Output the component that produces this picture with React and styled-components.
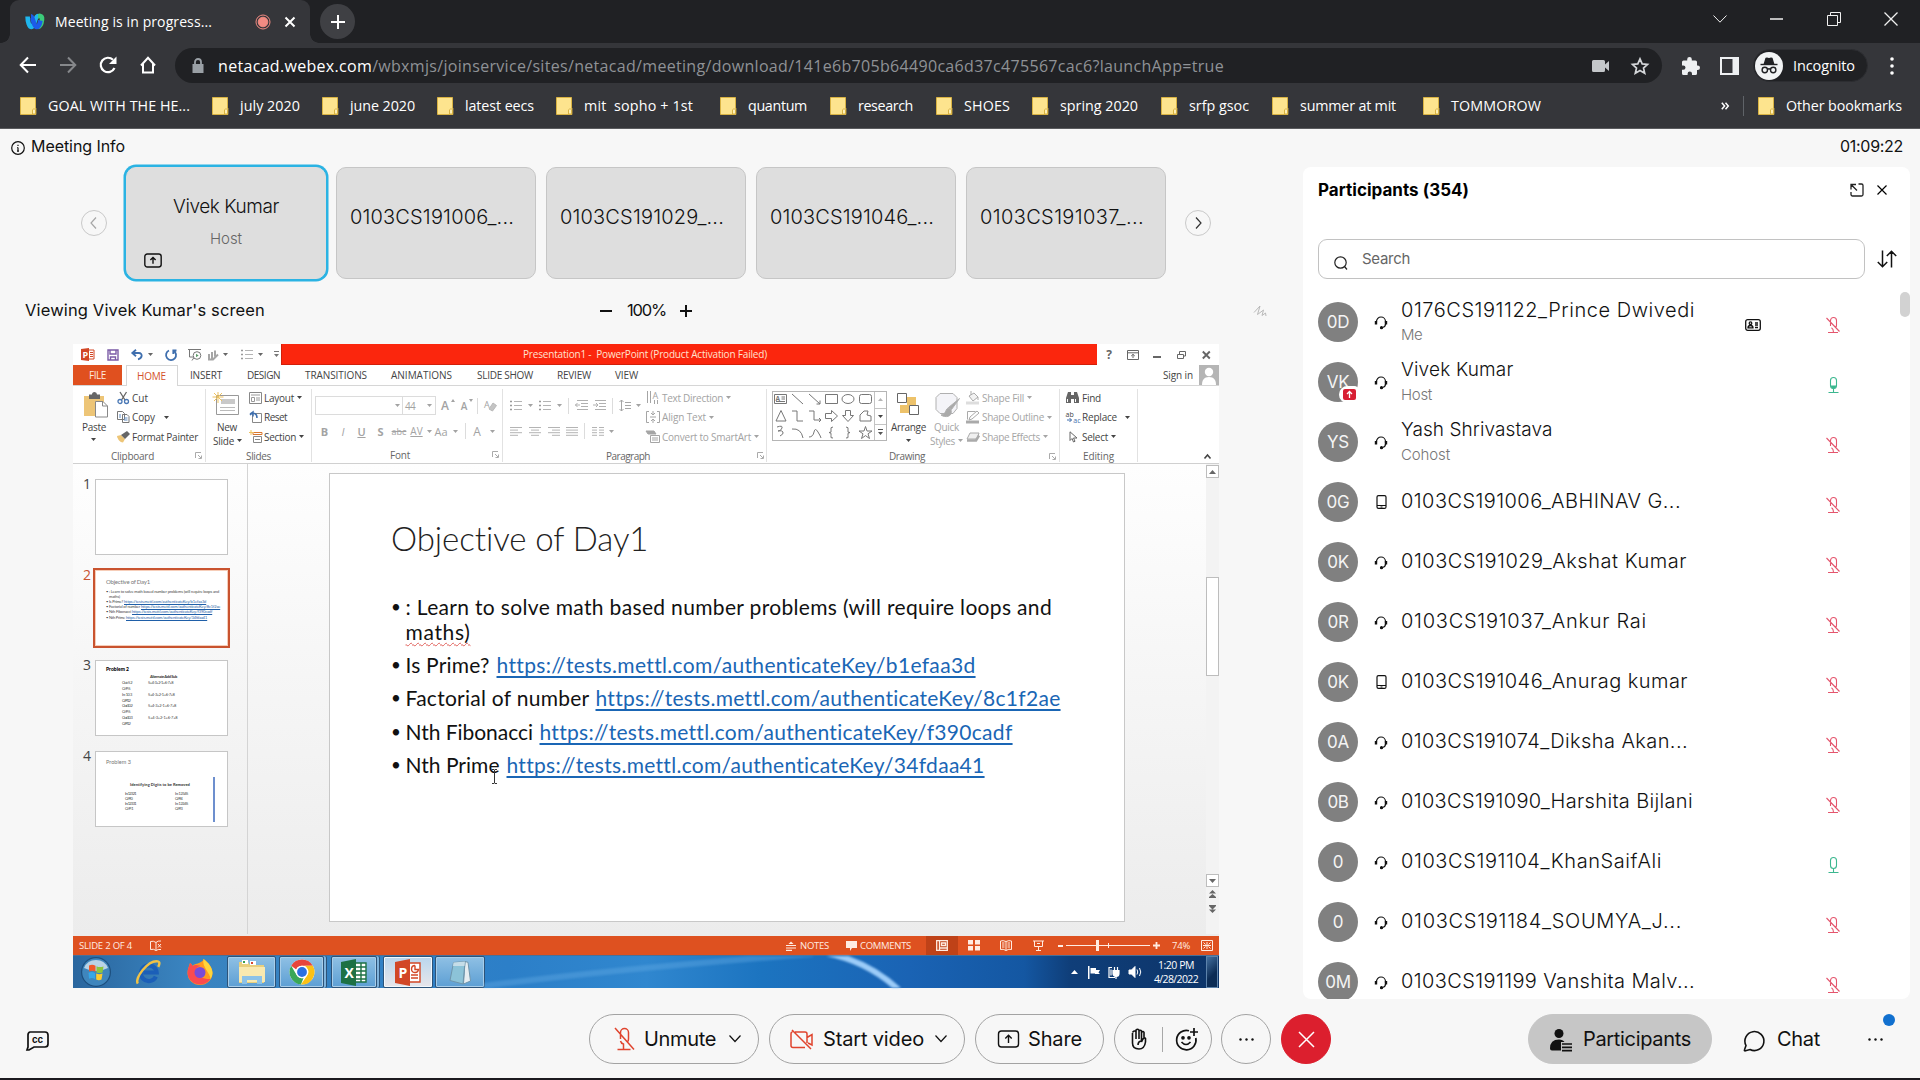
import React, { useLayoutEffect, useRef, useState } from "react";
import styled, { createGlobalStyle, css } from "styled-components";

const ui = '"Open Sans", "Noto Sans", sans-serif';
const webex = 'Inter, "Liberation Sans", sans-serif';
const slideFont = 'Lato, "Open Sans", sans-serif';

const Global = createGlobalStyle`
  * { box-sizing: border-box; }
  body { margin: 0; background: #f7f7f7; overflow: hidden; }
  ul, p, h1, h2 { margin: 0; padding: 0; list-style: none; font-weight: inherit; }
`;

/* ---------- text that tracks itself to a given width ---------- */

const FitBox = styled.span`
  display: inline-block;
  flex: none;
  width: ${(p) => p.$w}px;
  margin-left: ${(p) => p.$ml || 0}px;
  white-space: pre;
  text-decoration: inherit;
`;

function Fit({ w, ml, children }) {
  const ref = useRef(null);
  const [spacing, setSpacing] = useState(0);
  useLayoutEffect(() => {
    const natural = ref.current.getBoundingClientRect().width;
    setSpacing((w - natural) / ref.current.textContent.length);
  }, [w]);
  return (
    <FitBox $w={w} $ml={ml}>
      <span ref={ref} style={{ letterSpacing: spacing }}>{children}</span>
    </FitBox>
  );
}

const Glyph = styled.svg`
  display: block;
  flex: none;
  overflow: visible;
  fill: ${(p) => p.$fill || "none"};
  stroke: ${(p) => p.$stroke || "currentColor"};
  stroke-width: ${(p) => p.$sw || 1};
  margin-left: ${(p) => p.$ml || 0}px;
  margin-top: ${(p) => p.$mt || 0}px;
`;

const GlyphText = styled.text`
  font-family: ${(p) => p.$f || ui};
  font-size: ${(p) => p.$s}px;
  font-weight: ${(p) => p.$b || 400};
  fill: ${(p) => p.$c || "currentColor"};
  stroke: none;
`;

function Ic({ w, h = w, box, children, ...rest }) {
  return (
    <Glyph width={w} height={h} viewBox={box || `0 0 ${w} ${h}`} {...rest}>
      {children}
    </Glyph>
  );
}

const Slot = styled.span`
  display: flex;
  flex: none;
  align-items: center;
  justify-content: center;
  width: ${(p) => p.$w}px;
  margin-left: ${(p) => p.$ml || 0}px;
`;

const Spacer = styled.span`
  flex: 1;
`;

const Page = styled.div`
  display: flex;
  flex-direction: column;
  width: 1920px;
  height: 1080px;
  background: #f7f7f7;
  border-bottom: 2px solid #1c1a1f;
  font-family: ${webex};
  color: #111;
`;

/* ---------- browser ---------- */

const Browser = styled.header`
  flex: none;
  height: 129px;
  background: #35363a;
  border-bottom: 1px solid #5a5b5e;
  font-family: ${ui};
  color: #fff;
`;

const TabStrip = styled.div`
  display: flex;
  height: 43px;
  background: #202124;
`;

const Tab = styled.div`
  position: relative;
  display: flex;
  align-items: center;
  width: 300px;
  height: 43px;
  margin-left: 10px;
  background: #35363a;
  border-radius: 9px 9px 0 0;
  font-size: 14px;
  &::before,
  &::after {
    content: "";
    position: absolute;
    bottom: 0;
    width: 9px;
    height: 9px;
  }
  &::before {
    left: -9px;
    background: radial-gradient(circle at 0 0, #202124 8.5px, #35363a 9px);
  }
  &::after {
    right: -9px;
    background: radial-gradient(circle at 100% 0, #202124 8.5px, #35363a 9px);
  }
`;

const NewTab = styled.div`
  display: flex;
  align-items: center;
  justify-content: center;
  width: 35px;
  height: 35px;
  margin: 4px 0 0 10px;
  border-radius: 50%;
  background: #3f4044;
`;

const WindowControls = styled.div`
  display: flex;
  align-items: center;
  height: 37px;
  color: #f0f0f0;
`;

const NavBar = styled.div`
  display: flex;
  align-items: center;
  height: 45px;
`;

const NavIcons = styled.div`
  display: flex;
  align-items: center;
  gap: 20px;
  margin: -2px 0 0 18px;
`;

const Omnibox = styled.div`
  display: flex;
  align-items: center;
  width: 1487px;
  height: 35px;
  margin-left: 18px;
  border-radius: 18px;
  background: #202124;
  font-size: 16px;
  color: #8f9296;
  b {
    font-weight: 400;
    color: #fff;
  }
`;

const Incognito = styled.div`
  display: flex;
  align-items: center;
  width: 115px;
  height: 33px;
  margin-left: 14px;
  border: 1px solid #2c2d31;
  border-radius: 17px;
  background: #202124;
  font-size: 14.5px;
`;

const Bookmarks = styled.div`
  display: flex;
  align-items: center;
  height: 36px;
  padding-left: 20px;
  font-size: 14.3px;
`;

const Bookmark = styled.div`
  display: flex;
  align-items: center;
  flex: none;
  width: ${(p) => p.$w}px;
  line-height: 24px;
`;

const Folder = () => (
  <Ic w={16} h={18} $stroke="#d9b343">
    <path d="M.5.5h15V11h.4v6.5H.5z" fill="#fde48e" />
    <path d="M12.5 17v-4l1.5-1.5 1.5 1.500V17z" fill="#fff0b4" />
  </Ic>
);

const bookmarks = [
  ["GOAL WITH THE HE...", 142, 192],
  ["july 2020", 60, 110],
  ["june 2020", 65, 115],
  ["latest eecs", 69, 119],
  ["mit  sopho + 1st", 109, 164],
  ["quantum", 59, 110],
  ["research", 55, 106],
  ["SHOES", 46, 96],
  ["spring 2020", 78, 129],
  ["srfp gsoc", 60, 111],
  ["summer at mit", 96, 151],
  ["TOMMOROW", 90, 301],
];

const Pipe = styled.span`
  flex: none;
  width: 1px;
  height: ${(p) => p.$h}px;
  margin-left: ${(p) => p.$ml || 0}px;
  background: ${(p) => p.$c || "#dcdcdc"};
`;

function BrowserChrome() {
  return (
    <Browser>
      <TabStrip>
        <Tab>
          <Ic w={20} h={17} $ml={15} $sw={4.6}>
            <path d="M12 4.500c1.500-2.500 5.500-2.500 5 2-.4 4-1.600 7-4 7.500" stroke="#3ccb7a" />
            <path d="M2.600 3.600c0 5 1.600 10.400 4 10.400 2.600 0 3.400-11 6.400-11" stroke="#1fb6ee" />
            <path d="M6 3.200c2.200 0 2.400 10.800 5.600 10.800 2 0 3.200-3 3.800-6.500" stroke="#1c5be8" />
          </Ic>
          <Fit w={157} ml={10}>Meeting is in progress...</Fit>
          <Ic w={16} $ml={43} $stroke="#f28b82">
            <circle cx="8" cy="8" r="7" />
            <circle cx="8" cy="8" r="4.800" fill="#f28b82" />
          </Ic>
          <Ic w={12} $ml={13} $sw={2}>
            <path d="M1.500 1.500l9 9M10.500 1.500l-9 9" />
          </Ic>
        </Tab>
        <NewTab>
          <Ic w={16} $sw={2}>
            <path d="M8 1v14M1 8h14" />
          </Ic>
        </NewTab>
        <Spacer />
        <WindowControls>
          <Slot $w={57}>
            <Ic w={14} h={8}>
              <path d="M.5.5L7 7.200 13.500.5" />
            </Ic>
          </Slot>
          <Slot $w={57}>
            <Ic w={13} h={2} $sw={1.500}>
              <path d="M0 1h13" />
            </Ic>
          </Slot>
          <Slot $w={57}>
            <Ic w={14}>
              <path d="M.5 3.500h10v10H.5zM3.500 3.500v-3h10v10h-3" />
            </Ic>
          </Slot>
          <Slot $w={58}>
            <Ic w={14} $sw={1.300}>
              <path d="M.5.5l13 13M13.500.5l-13 13" />
            </Ic>
          </Slot>
        </WindowControls>
      </TabStrip>
      <NavBar>
        <NavIcons>
          <Slot $w={20}>
            <Ic w={18} $sw={2}>
              <path d="M17 9H2M9 1.500L1.700 9 9 16.500" />
            </Ic>
          </Slot>
          <Slot $w={20}>
            <Ic w={18} $sw={2} $stroke="#86888b">
              <path d="M1 9h15M9 1.500L16.300 9 9 16.500" />
            </Ic>
          </Slot>
          <Slot $w={20}>
            <Ic w={18} $sw={2.200}>
              <path d="M15.500 12A7.200 7.200 0 1 1 14 3.800" />
              <path d="M17.500.5v7.500H10z" fill="#fff" stroke="none" />
            </Ic>
          </Slot>
          <Slot $w={19}>
            <Ic w={16} h={18} $sw={2}>
              <path d="M1 9.500L8 1.800l7 7.700M3 8V16.500h10V8" />
            </Ic>
          </Slot>
        </NavIcons>
        <Omnibox>
          <Ic w={12} h={16} $ml={17} $stroke="#9aa0a6" $sw={1.800}>
            <path d="M3 7V4a3 3 0 0 1 6 0v3" />
            <rect x="1.400" y="6.900" width="9.200" height="7.200" fill="#9aa0a6" />
          </Ic>
          <Fit w={1006} ml={14}>
            <b>netacad.webex.com</b>/wbxmjs/joinservice/sites/netacad/meeting/download/141e6b705b64490ca6d37c475567cac6?launchApp=true
          </Fit>
          <Ic w={17} h={12} $ml={368} $fill="#c4c7ca" $stroke="none">
            <path d="M1.500 0h10A1.500 1.500 0 0 1 13 1.500V4.500l4-3.500v10l-4-3.500v3A1.500 1.500 0 0 1 11.500 12h-10A1.500 1.500 0 0 1 0 10.500v-9A1.500 1.500 0 0 1 1.500 0z" />
          </Ic>
          <Ic w={18} $ml={22} $stroke="#d4d6d9" $sw={1.700}>
            <path d="M9 1.900l2.200 5 5.300.5-4 3.600 1.200 5.200L9 13.500l-4.700 2.700 1.200-5.200-4-3.600 5.300-.5z" />
          </Ic>
        </Omnibox>
        <Ic w={18} $ml={20} $fill="#eef0f2" $stroke="none">
          <path d="M7.500 0a2.300 2.300 0 0 1 2.300 2.300V3.500h3.700A1.500 1.500 0 0 1 15 5v3.400h.7a2.300 2.300 0 0 1 0 4.600H15v3.500A1.500 1.500 0 0 1 13.500 18H10v-1.300a2.200 2.200 0 0 0-4.400 0V18H1.500A1.500 1.500 0 0 1 0 16.500V12.800h1.300a2.200 2.200 0 0 0 0-4.400H0V5a1.500 1.500 0 0 1 1.500-1.500h3.700V2.300A2.300 2.300 0 0 1 7.500 0z" />
        </Ic>
        <Ic w={19} h={18} $ml={20} $sw={2} $stroke="#eef0f2">
          <path d="M1 1h17v16H1z" />
          <path d="M12.500 2h5v14h-5z" fill="#eef0f2" stroke="none" />
        </Ic>
        <Incognito>
          <Ic w={28} $ml={1} $stroke="#202124" $sw={1.400}>
            <circle cx="14" cy="14" r="14" fill="#f1f3f4" stroke="none" />
            <path d="M9.500 11.500L11 6.500c1.500-.7 1.800.3 3 .3s1.500-1 3-.3l1.500 5z" fill="#202124" />
            <path d="M5.500 12.500h17" />
            <circle cx="9.800" cy="18" r="2.700" />
            <circle cx="18.200" cy="18" r="2.700" />
            <path d="M12.500 17.300q1.500-1 3 0" />
          </Ic>
          <Fit w={62} ml={10}>Incognito</Fit>
        </Incognito>
        <Ic w={4} h={18} $ml={22} $fill="#fff" $stroke="none">
          <circle cx="2" cy="2" r="1.800" />
          <circle cx="2" cy="9" r="1.800" />
          <circle cx="2" cy="16" r="1.800" />
        </Ic>
      </NavBar>
      <Bookmarks>
        {bookmarks.map(([name, w, pitch]) => (
          <Bookmark key={name} $w={pitch}>
            <Folder />
            <Fit w={w} ml={12}>{name}</Fit>
          </Bookmark>
        ))}
        <Ic w={8} h={8} $ml={-3} $sw={1.500}>
          <path d="M.8.8L3.600 4 .8 7.200M4.500.8L7.300 4 4.500 7.200" />
        </Ic>
        <Pipe $h={20} $ml={14} $c="#5f6368" />
        <Bookmark $w={150}>
          <Slot $w={16} $ml={14}><Folder /></Slot>
          <Fit w={116} ml={12}>Other bookmarks</Fit>
        </Bookmark>
      </Bookmarks>
    </Browser>
  );
}

/* ---------- Webex stage ---------- */

const Webex = styled.main`
  display: flex;
  flex-direction: column;
  height: 949px;
`;

const InfoBar = styled.div`
  display: flex;
  align-items: center;
  height: 38px;
  padding: 0 0 4px 11px;
  font-size: 16px;
`;

const Middle = styled.div`
  display: flex;
  height: 832px;
`;

const Stage = styled.section`
  display: flex;
  flex-direction: column;
  width: 1303px;
`;

const FilmStrip = styled.div`
  display: flex;
  align-items: center;
  height: 112px;
`;

const RoundArrow = styled.div`
  display: flex;
  align-items: center;
  justify-content: center;
  width: 26px;
  height: 26px;
  margin-left: ${(p) => p.$ml}px;
  border: 1px solid #c9c9c9;
  border-radius: 50%;
  color: ${(p) => (p.$off ? "#a6a6a6" : "#333")};
`;

const Cards = styled.div`
  display: flex;
  gap: 10px;
  margin-left: 19px;
`;

const Card = styled.div`
  display: flex;
  flex-direction: column;
  align-items: center;
  width: 200px;
  height: 112px;
  padding-top: ${(p) => (p.$active ? 25 : 36)}px;
  border: 1px solid ${(p) => (p.$active ? "#dedede" : "#c6c6c6")};
  border-radius: 10px;
  background: #dedede;
  font-size: ${(p) => (p.$active ? 19 : 20)}px;
  font-weight: 300;
  line-height: 27px;
  ${(p) => p.$active && css`box-shadow: 0 0 0 2.500px #2bb3e3;`}
`;

const CardRole = styled.div`
  margin-top: 8px;
  font-size: 15px;
  line-height: 22px;
  color: #666;
`;

const CardFoot = styled.div`
  align-self: flex-start;
  padding: 3px 0 0 17px;
`;

const ViewBar = styled.div`
  display: flex;
  align-items: center;
  height: 65px;
  padding: 0 0 3px 25px;
  font-size: 16.5px;
`;

const Chevron = ({ dir = "down", w = 12 }) => (
  <Ic w={w} h={w} box="0 0 12 12" $sw={1.200}>
    <path
      d={dir === "left" ? "M8 .5L3 6l5 5.500" : dir === "right" ? "M4 .5L9 6l-5 5.500" : "M.5 2.500L6 8.500l5.500-6"}
    />
  </Ic>
);

const ShareGlyph = ({ w, h, sw = 1.400, ml }) => (
  <Ic w={w} h={h} box="0 0 22 18" $sw={sw} $ml={ml}>
    <rect x="1" y="1" width="20" height="16" rx="3" />
    <path d="M11 13V5.500M7.800 8.500L11 5.300l3.200 3.200" />
  </Ic>
);

function TopStrip() {
  return (
    <>
      <FilmStrip>
        <RoundArrow $ml={80.5} $off><Chevron dir="left" /></RoundArrow>
        <Cards>
          <Card $active>
            <Fit w={106} ml={1}>Vivek Kumar</Fit>
            <CardRole><Fit w={32} ml={1}>Host</Fit></CardRole>
            <CardFoot><ShareGlyph w={18} h={15} sw={1.700} /></CardFoot>
          </Card>
          {["0103CS191006_...", "0103CS191029_...", "0103CS191046_...", "0103CS191037_..."].map((n) => (
            <Card key={n}><Fit w={164} ml={-7}>{n}</Fit></Card>
          ))}
        </Cards>
        <RoundArrow $ml={19.5}><Chevron dir="right" /></RoundArrow>
      </FilmStrip>
      <ViewBar>
        <Fit w={240}>Viewing Vivek Kumar's screen</Fit>
        <Ic w={12} h={12} $ml={335} $mt={2} $sw={2}><path d="M0 6h12" /></Ic>
        <Fit w={39} ml={15}>100%</Fit>
        <Ic w={12} h={12} $ml={14} $mt={2} $sw={2}><path d="M0 6h12M6 0v12" /></Ic>
        <Ic w={14} h={12} $ml={561} $mt={2} $stroke="#b9b9b9">
          <path d="M1 7.500L7 1 4.500 9.500 10.500 5 9 10.500l3.500-2.500.5 3" />
        </Ic>
      </ViewBar>
    </>
  );
}

/* ---------- PowerPoint ---------- */

const Ppt = styled.div`
  display: flex;
  flex-direction: column;
  width: 1146px;
  height: 644px;
  margin-left: 73px;
  background: #fff;
  font-family: ${ui};
  font-size: 10px;
  color: #444;
`;

const TitleRow = styled.div`
  display: flex;
  align-items: center;
  height: 21px;
  color: #666;
`;

const RedTitle = styled.div`
  display: flex;
  align-items: center;
  flex: none;
  height: 21px;
  width: 816px;
  margin-left: 2px;
  padding-left: 241px;
  background: #fb260d;
  border-left: 1px solid #d21f0a;
  border-bottom: 1px solid #d21f0a;
  color: #ffe3cf;
`;

const TabRow = styled.div`
  display: flex;
  height: 21px;
  line-height: 21px;
  border-bottom: 1px solid #d6d6d6;
`;

const FileTab = styled.div`
  width: 49px;
  height: 20px;
  padding-left: 16px;
  background: #e0501f;
  color: #ffe9dd;
`;

const HomeTab = styled.div`
  width: 52px;
  height: 21px;
  margin-left: 4px;
  padding-left: 10px;
  border: 1px solid #d6d6d6;
  border-bottom: 0;
  line-height: 20px;
  background: #fff;
  color: #d3532c;
`;

const Avatar = styled.div`
  width: 20px;
  height: 20px;
  margin-left: 6px;
  background: #b5b5b5;
`;

const Ribbon = styled.div`
  display: flex;
  height: 78px;
  border-bottom: 1px solid #d0d0d0;
`;

const Group = styled.div`
  display: flex;
  flex-direction: column;
  flex: none;
  width: ${(p) => p.$w}px;
  height: 73px;
  margin-top: 3px;
  border-right: 1px solid #e2e2e2;
  color: ${(p) => (p.$off ? "#a3a3a3" : "#444")};
`;

const GroupBody = styled.div`
  display: flex;
  height: 59px;
`;

const GroupFoot = styled.div`
  display: flex;
  align-items: center;
  height: 15px;
  margin-top: 2px;
  color: #666;
`;

const Launcher = ({ ml }) => (
  <Ic w={7} $ml={ml} $stroke="#aaa">
    <path d="M.5 6V.5H6M3 3l3 3M6.500 3.500v3h-3" />
  </Ic>
);

const Column = styled.div`
  display: flex;
  flex-direction: column;
  flex: none;
  width: ${(p) => p.$w || "auto"};
  margin: ${(p) => (p.$pt ? 0 : -1)}px 0 0 ${(p) => p.$ml || 0}px;
  padding-top: ${(p) => p.$pt || 0}px;
  color: ${(p) => p.$c || "inherit"};
`;

const Line = styled.div`
  display: flex;
  align-items: center;
  height: ${(p) => p.$h || 19.500}px;
  margin-top: ${(p) => p.$mt || 0}px;
  padding-left: ${(p) => p.$pl || 0}px;
`;

const Drop = ({ ml }) => (
  <Ic w={5} h={3} $ml={ml} $fill="currentColor" $stroke="none"><path d="M0 0h5L2.500 3z" /></Ic>
);

const FontBox = styled.div`
  display: flex;
  align-items: center;
  width: ${(p) => p.$w}px;
  height: 19px;
  margin-left: ${(p) => p.$ml || 0}px;
  padding-left: 2px;
  border: 1px solid #dcdcdc;
`;

const Letter = styled.span`
  width: ${(p) => p.$w}px;
  flex: none;
  text-align: center;
  font-size: ${(p) => p.$s || 11}px;
  font-weight: ${(p) => p.$b || 400};
  font-style: ${(p) => (p.$i ? "italic" : "normal")};
  text-decoration: ${(p) => p.$d || "none"};
`;

const Gallery = styled.div`
  display: flex;
  width: 115px;
  height: 50px;
  margin: 2px 0 0 5px;
  border: 1px solid #b5b5b5;
`;

const GalleryScroll = styled.div`
  display: flex;
  flex-direction: column;
  width: 12px;
  margin-left: auto;
`;

const GalleryButton = styled.div`
  display: flex;
  align-items: center;
  justify-content: center;
  height: 16px;
  border-left: 1px solid #c4c4c4;
  & + & {
    border-top: 1px solid #c4c4c4;
    height: 16.500px;
  }
`;

const Lines = ({ rows, w = 12, ml, bullets }) => (
  <Ic w={w} h={11} $ml={ml} $stroke="#b4b4b4">
    {rows.map(([x, len], i) => (
      <path key={i} d={`M${x} ${1.500 + i * (bullets ? 4 : 2.600)}h${len}`} />
    ))}
    {bullets && <path d="M0 1.500h2M0 5.500h2M0 9.500h2" stroke="#999" strokeWidth="1.600" />}
  </Ic>
);

const bulletRows = [[4, 8], [4, 8], [4, 8]];

function QuickAccess() {
  return (
    <TitleRow>
      <Ic w={14} h={13} $ml={8} $stroke="#d24726">
        <path d="M7 2h6v9H7z" fill="#fff" />
        <path d="M9 4.500h3M9 6.500h3M9 8.500h3" />
        <path d="M0 1l8-1v13l-8-1z" fill="#d24726" stroke="none" />
        <GlyphText x="1.500" y="10" $s={9} $b={700} $c="#fff">P</GlyphText>
      </Ic>
      <Ic w={12} h={12} $ml={12} $stroke="#7b5ba6" $sw={1.400}>
        <path d="M1 1h10v10H1zM3 1v4h6V1M3.500 11V8h5v3" />
      </Ic>
      <Ic w={13} h={11} $ml={12} $stroke="#3f6fae" $sw={1.800}>
        <path d="M5 .8L1.300 4 5 7.200M1.500 4h6.500c3.500 0 4 5-1 6.300" />
      </Ic>
      <Drop ml={4} />
      <Ic w={12} h={12} $ml={12} $stroke="#3f6fae" $sw={1.800}>
        <path d="M4 1.500a5 5 0 1 0 4.500.2M8.300 5V1.500h3.200" />
      </Ic>
      <Ic w={14} h={12} $ml={11} $stroke="#777">
        <path d="M0 .5h13M1.500.5v7.500H6M4 11.500l2-3" />
        <circle cx="9" cy="6.500" r="3.800" fill="#fff" />
        <path d="M8 4.800v3.400l2.700-1.700z" fill="#5f9c6a" stroke="none" />
      </Ic>
      <Ic w={12} h={12} $ml={5} $stroke="#a5a5a5" $sw={2}>
        <path d="M2 5v4.500M5 3v7M8 1.500v6M1 10.500h5l5-5" />
      </Ic>
      <Drop ml={4} />
      <Lines ml={13} bullets rows={bulletRows} />
      <Slot $w={5} $ml={5}><Drop /></Slot>
      <Ic w={5} h={7} $ml={11} $fill="#777" $stroke="none"><path d="M0 0h5v1H0zM0 3h5L2.500 6z" /></Ic>
      <RedTitle><Fit w={244}>Presentation1 -  PowerPoint (Product Activation Failed)</Fit></RedTitle>
      <Letter $w={24} $b={700} $s={12}>?</Letter>
      <Ic w={12} h={10} $ml={6}>
        <path d="M.5.5h11v9H.5zM.5 2.800h11M6 8V4.500M4.200 6L6 4.300 7.800 6" />
      </Ic>
      <Ic w={8} h={9} $ml={14} $sw={2}><path d="M0 7h8" /></Ic>
      <Ic w={9} h={8} $ml={16}><path d="M.5 3.500h6v4h-6zM2.500 3V.5h6v4.500H7" /></Ic>
      <Ic w={9} h={8} $ml={16} $sw={1.900}><path d="M.8.5l7 7M7.800.5l-7 7" /></Ic>
    </TitleRow>
  );
}

function PptTabs() {
  return (
    <TabRow>
      <FileTab><Fit w={17}>FILE</Fit></FileTab>
      <HomeTab><Fit w={29}>HOME</Fit></HomeTab>
      <Fit w={32} ml={12}>INSERT</Fit>
      <Fit w={33} ml={25}>DESIGN</Fit>
      <Fit w={62} ml={25}>TRANSITIONS</Fit>
      <Fit w={61} ml={24}>ANIMATIONS</Fit>
      <Fit w={56} ml={25}>SLIDE SHOW</Fit>
      <Fit w={34} ml={24}>REVIEW</Fit>
      <Fit w={23} ml={24}>VIEW</Fit>
      <Spacer />
      <Fit w={30}>Sign in</Fit>
      <Avatar>
        <Ic w={20} $fill="#fff" $stroke="none">
          <circle cx="10" cy="7" r="4.200" />
          <path d="M3 20c0-5 2-8 7-8s7 3 7 8z" />
        </Ic>
      </Avatar>
    </TabRow>
  );
}

function RibbonBar() {
  return (
    <Ribbon>
      <Group $w={133}>
        <GroupBody>
          <Column $ml={9} $pt={3}>
            <Ic w={26} h={26} $stroke="none" $ml={1}>
              <path d="M1 4h20v20H1z" fill="#edc577" />
              <path d="M6 2.500h3a2.500 2.500 0 0 1 5 0h3V7H6z" fill="#666" />
              <path d="M12.500 9.500h7.500l4.500 4.500v11h-12z" fill="#fff" stroke="#888" />
              <path d="M19.500 9.500V14h5" stroke="#888" fill="none" />
            </Ic>
            <Line $h={14} $mt={2}><Fit w={24}>Paste</Fit></Line>
            <Line $h={11} $pl={9}><Drop /></Line>
          </Column>
          <Column $ml={8}>
            <Line>
              <Ic w={12} h={12} $stroke="#666" $sw={1.300}>
                <path d="M3 0l5 8M9.500 0L4.500 8" />
                <circle cx="3" cy="9.500" r="2" stroke="#4a78b5" />
                <circle cx="9.500" cy="9.500" r="2" stroke="#4a78b5" />
              </Ic>
              <Fit w={16} ml={3}>Cut</Fit>
            </Line>
            <Line>
              <Ic w={13} h={12} $stroke="#777">
                <path d="M.5.5h5l2 2v6h-7zM5.500 3.500h4.500l2 2v6H5.500z" fill="#fff" />
                <path d="M7 7h3.500M7 9h3.500M2 4h2M2 6h2" stroke="#5b8ac2" />
              </Ic>
              <Fit w={23} ml={2}>Copy</Fit>
              <Drop ml={9} />
            </Line>
            <Line>
              <Ic w={13} h={12} $stroke="none">
                <path d="M0 5l4-1 4 4-2 3.500C3 11.500.5 8 0 5z" fill="#edc577" />
                <path d="M4 4l6-4 3 3-5 5z" fill="#666" />
              </Ic>
              <Fit w={66} ml={2}>Format Painter</Fit>
            </Line>
          </Column>
        </GroupBody>
        <GroupFoot><Fit w={43} ml={38}>Clipboard</Fit><Launcher ml={41} /></GroupFoot>
      </Group>

      <Group $w={106}>
        <GroupBody>
          <Column $ml={7} $pt={3}>
            <Ic w={27} h={24} $stroke="#999">
              <path d="M3.500 3.500h22v19h-22z" fill="#fff" />
              <path d="M8 7h14v5H8z" fill="#c9c9c9" stroke="none" />
              <path d="M7 15.500h15M7 18.500h15" stroke="#bbb" />
              <path d="M5 0v11M-.5 5h11M1 1l8 8M9 1L1 9" stroke="#edc15f" />
            </Ic>
            <Line $h={14} $mt={4} $pl={4}><Fit w={20}>New</Fit></Line>
            <Line $h={13}><Fit w={21}>Slide</Fit><Drop ml={3} /></Line>
          </Column>
          <Column $ml={7}>
            <Line>
              <Ic w={14} h={12} $stroke="#888">
                <path d="M.5.5h12v11H.5z" fill="#fff" />
                <path d="M2 3h9M2.500 5.500h3v4h-3zM7 6h4M7 8h4" stroke="#999" />
              </Ic>
              <Fit w={30} ml={1}>Layout</Fit><Drop ml={3} />
            </Line>
            <Line>
              <Ic w={14} h={12} $stroke="#888">
                <path d="M3.500 2.500h9v9h-9z" fill="#fff" />
                <path d="M1 3l3-2v4.500M1 4c3-3 7-2 7 3" stroke="#3f6fae" strokeWidth="1.500" />
              </Ic>
              <Fit w={23} ml={1}>Reset</Fit>
            </Line>
            <Line>
              <Ic w={14} h={13} $stroke="#888">
                <path d="M4.500 6.500h8v6h-8z" fill="#fff" />
                <path d="M4 2.500h9v2H4z" stroke="#d9762f" />
                <path d="M6 9.500h5" />
                <path d="M2 0v5M0 2.500h5" stroke="#edc15f" />
              </Ic>
              <Fit w={32} ml={1}>Section</Fit><Drop ml={3} />
            </Line>
          </Column>
        </GroupBody>
        <GroupFoot><Fit w={25} ml={40}>Slides</Fit></GroupFoot>
      </Group>

      <Group $w={191} $off>
        <GroupBody>
          <Column $ml={3} $pt={7}>
            <Line $h={19}>
              <FontBox $w={88}><Drop ml={77} /></FontBox>
              <FontBox $w={34} $ml={-1}><Fit w={10}>44</Fit><Drop ml={12} /></FontBox>
              <Letter $w={18} $s={12} $b={600}>A</Letter>
              <Ic w={4} h={3} $ml={-3} $mt={-10} $fill="currentColor" $stroke="none"><path d="M0 3h4L2 0z" /></Ic>
              <Letter $w={18} $s={10} $b={600}>A</Letter>
              <Ic w={4} h={3} $ml={-4} $mt={-10} $fill="currentColor" $stroke="none"><path d="M0 0h4L2 3z" /></Ic>
              <Pipe $h={16} $ml={4} />
              <Ic w={13} h={12} $ml={6} $stroke="#b9b9b9">
                <GlyphText x="0" y="8" $s={9}>A</GlyphText>
                <path d="M5 9l4-6 3.500 2.500L8.500 11z" fill="#c4c4c4" />
              </Ic>
            </Line>
            <Line $h={18} $mt={7}>
              <Letter $w={19} $b={700}>B</Letter>
              <Letter $w={18} $i>I</Letter>
              <Letter $w={19} $b={600} $d="underline">U</Letter>
              <Letter $w={19} $b={700}>S</Letter>
              <Letter $w={18} $s={9} $d="line-through">abc</Letter>
              <Letter $w={17} $s={10} $d="underline">AV</Letter>
              <Drop ml={2} />
              <Letter $w={18} $s={11}>Aa</Letter>
              <Drop ml={3} />
              <Pipe $h={16} $ml={7} />
              <Letter $w={22} $s={12}>A</Letter>
              <Drop ml={2} />
            </Line>
          </Column>
        </GroupBody>
        <GroupFoot><Fit w={20} ml={78}>Font</Fit><Launcher ml={82} /></GroupFoot>
      </Group>

      <Group $w={264} $off>
        <GroupBody>
          <Column $ml={7} $pt={7} $w="136px">
            <Line $h={19}>
              <Lines bullets rows={bulletRows} /><Drop ml={6} />
              <Lines ml={6} bullets rows={bulletRows} /><Drop ml={6} />
              <Pipe $h={16} $ml={6} />
              <Ic w={13} h={11} $ml={6} $stroke="#b0b0b0">
                <path d="M2 .5h11M6 3.500h7M6 6.500h7M2 9.500h11M0 5h5M2.500 3L.5 5l2 2" />
              </Ic>
              <Ic w={13} h={11} $ml={5} $stroke="#b0b0b0">
                <path d="M2 .5h11M6 3.500h7M6 6.500h7M2 9.500h11M0 5h5M3 3l2 2-2 2" />
              </Ic>
              <Pipe $h={16} $ml={6} />
              <Ic w={12} h={13} $ml={6} $stroke="#a5a5a5">
                <path d="M2.500 1v11M.5 3l2-2 2 2M.5 10l2 2 2-2M6 3.500h6M6 6.500h6M6 9.500h6" />
              </Ic>
              <Drop ml={5} />
            </Line>
            <Line $h={18} $mt={7}>
              <Lines rows={[[0, 12], [0, 8], [0, 12], [0, 8]]} />
              <Lines ml={7} rows={[[0, 12], [2, 8], [0, 12], [2, 8]]} />
              <Lines ml={7} rows={[[0, 12], [4, 8], [0, 12], [4, 8]]} />
              <Lines ml={6} rows={[[0, 12], [0, 12], [0, 12], [0, 12]]} />
              <Pipe $h={16} $ml={6} />
              <Ic w={12} h={11} $ml={7} $stroke="#b4b4b4">
                <path d="M0 1.500h5M0 4.100h5M0 6.700h5M0 9.300h5M7 1.500h5M7 4.100h5M7 6.700h5M7 9.300h5" />
              </Ic>
              <Drop ml={5} />
            </Line>
          </Column>
          <Column>
            <Line>
              <Ic w={14} h={13} $stroke="#a5a5a5">
                <path d="M1.500 0v12M4.500 0v12M8.500 9v4M11.500 9v4" />
                <GlyphText x="6.500" y="8" $s={9}>A</GlyphText>
              </Ic>
              <Fit w={61} ml={2}>Text Direction</Fit><Drop ml={3} />
            </Line>
            <Line>
              <Ic w={14} h={12} $stroke="#a5a5a5">
                <path d="M3 .5H.5v11H3M11 .5h2.500v11H11M7 0v4M7 8v4M4 6h6M5 2l2 2 2-2M5 10l2-2 2 2" />
              </Ic>
              <Fit w={44} ml={2}>Align Text</Fit><Drop ml={3} />
            </Line>
            <Line>
              <Ic w={14} h={13} $stroke="#a5a5a5">
                <path d="M0 1h8l2 3H2z" fill="#a5a5a5" />
                <path d="M4.500 5.500h9v7h-9zM6 8h6M6 10h6" />
              </Ic>
              <Fit w={89} ml={2}>Convert to SmartArt</Fit><Drop ml={3} />
            </Line>
          </Column>
        </GroupBody>
        <GroupFoot><Fit w={44} ml={103}>Paragraph</Fit><Launcher ml={107} /></GroupFoot>
      </Group>

      <Group $w={293}>
        <GroupBody>
          <Gallery>
            <Ic w={100} h={48} $stroke="#777">
              <path d="M1.500 2.500h12v9h-12zM8.500 5h3.500M8.500 7h3.500M3 9.500h9" />
              <GlyphText x="2.500" y="8.500" $s={6.500} $b={700} $c="#777">A</GlyphText>
              <path d="M19 2l11 10M36 2l11 10M43.500 12H47V8.500" />
              <path d="M52.500 2.500h12v9h-12z" />
              <ellipse cx="75" cy="7" rx="6" ry="4.500" />
              <rect x="86.500" y="2.500" width="12" height="9" rx="2" />
              <path d="M8 18.500l5 10.500H3zM19 19h5v10h6M36 19h5v9h7M46 26l2 2-2 2" />
              <path d="M52.500 21.500h6v-3l6 5.500-6 5.500v-3h-6zM72.500 18.500h5v5h3l-5.500 6-5.500-6h3z" />
              <path d="M87 29V23l4-4h4l-1 4 4 1v5z" />
              <path d="M4 35q6-2 5 1t-4 3q4-1 5 1t-3 4M19 37q9-1 11 9M36 45q4 0 5-5t4 0 3 6" />
              <path d="M60 35q-3 0-2 3t-2 2.500q3 0 2 3t2 2.500M73 35q3 0 2 3t2 2.500q-3 0-2 3t-2 2.500" />
              <path d="M92.500 34.500l1.500 4.500h5l-4 2.800 1.500 4.700-4-2.900-4 2.900 1.500-4.700-4-2.800h5z" />
            </Ic>
            <GalleryScroll>
              <GalleryButton><Ic w={5} h={3} $fill="#b5b5b5" $stroke="none"><path d="M0 3h5L2.500 0z" /></Ic></GalleryButton>
              <GalleryButton><Drop /></GalleryButton>
              <GalleryButton><Ic w={5} h={6} $fill="#555" $stroke="none"><path d="M0 0h5v1H0zM0 3h5L2.500 6z" /></Ic></GalleryButton>
            </GalleryScroll>
          </Gallery>
          <Column $ml={4} $pt={3}>
            <Ic w={24} h={25} $ml={5} $stroke="#666">
              <path d="M11 5h9v8h-9zM4 13h9v8H4z" fill="#edc26a" stroke="none" />
              <path d="M1.500 1.500h9v9h-9zM13.500 13.500h9v9h-9z" fill="#fff" />
            </Ic>
            <Line $h={14} $mt={3}><Fit w={35}>Arrange</Fit></Line>
            <Line $h={12} $pl={15}><Drop /></Line>
          </Column>
          <Column $ml={4} $pt={3} $c="#a5a5a5">
            <Ic w={26} h={26} $ml={5} $stroke="#b0b0b0">
              <path d="M5 1.500h13l4 4v11l-4 5H5l-4-4v-12z" fill="#f4f4f8" />
              <path d="M24.500 6.500l-8 11-3-2z" fill="#aaa" />
              <path d="M14 16c-4 0-2 6-8 7 4 3 12 2 10-5z" fill="#aaa" />
            </Ic>
            <Line $h={14} $mt={2} $pl={4}><Fit w={25}>Quick</Fit></Line>
            <Line $h={13}><Fit w={25}>Styles</Fit><Drop ml={3} /></Line>
          </Column>
          <Column $ml={3} $c="#a5a5a5">
            <Line>
              <Ic w={14} h={14} $stroke="#aaa">
                <path d="M3 5l5-3 4 4-5 4z" fill="#f2f2f2" /><path d="M5 4V0M12 6v3" /><path d="M0 12h13" stroke="#ddd" strokeWidth="3" />
              </Ic>
              <Fit w={42} ml={2}>Shape Fill</Fit><Drop ml={3} />
            </Line>
            <Line>
              <Ic w={14} h={14} $stroke="#aaa">
                <path d="M1.500 9.500v-8h8M3 10l1-3 7-6 2 2-7 6z" /><path d="M0 12h13" strokeWidth="3" />
              </Ic>
              <Fit w={62} ml={2}>Shape Outline</Fit><Drop ml={3} />
            </Line>
            <Line>
              <Ic w={14} h={12} $stroke="#aaa">
                <path d="M1 8l3-6h9l-2 6z" fill="#f0f0f0" /><path d="M1 9.500h9l3-5" strokeWidth="2.500" />
              </Ic>
              <Fit w={58} ml={2}>Shape Effects</Fit><Drop ml={3} />
            </Line>
          </Column>
        </GroupBody>
        <GroupFoot><Fit w={36} ml={122}>Drawing</Fit><Launcher ml={124} /></GroupFoot>
      </Group>

      <Group $w={78}>
        <GroupBody>
          <Column $ml={6}>
            <Line>
              <Ic w={13} h={11} $fill="#666" $stroke="none">
                <path d="M0 11V6l2-6h3v3h3V0h3l2 6v5H8V7H5v4z" /><path d="M1.500 7v3M9.500 7v3" stroke="#fff" />
              </Ic>
              <Fit w={19} ml={3}>Find</Fit>
            </Line>
            <Line>
              <Ic w={14} h={14}>
                <GlyphText x="-.5" y="6.500" $s={7}>ab</GlyphText>
                <GlyphText x="7.300" y="12.500" $s={7} $c="#3f6fae">ac</GlyphText>
                <path d="M1 10h4.500M3.500 8L5.500 10l-2 2" stroke="#3f6fae" />
              </Ic>
              <Fit w={35} ml={2}>Replace</Fit><Drop ml={8} />
            </Line>
            <Line>
              <Ic w={9} h={12} $ml={3} $stroke="#666">
                <path d="M1 .8v8.700l2-2 1.500 3.500 1.500-.700L4.500 7H8z" />
              </Ic>
              <Fit w={26} ml={4}>Select</Fit><Drop ml={3} />
            </Line>
          </Column>
        </GroupBody>
        <GroupFoot><Fit w={31} ml={23}>Editing</Fit></GroupFoot>
      </Group>
      <Ic w={7} h={5} $ml={66} $mt={68} $sw={1.600}><path d="M.5 4.500l3-3.500 3 3.500" /></Ic>
    </Ribbon>
  );
}

const Body = styled.div`
  display: flex;
  height: 472px;
  background: linear-gradient(#fefefe, #ececec);
`;

const ThumbPane = styled.div`
  display: flex;
  flex-direction: column;
  width: 175px;
  height: 470px;
  padding: 15px 0 0 10px;
  border-right: 1px solid #d4d4d4;
`;

const ThumbRow = styled.div`
  display: flex;
  height: 90.700px;
  color: ${(p) => (p.$on ? "#c9532f" : "#444")};
  font-size: 14px;
  line-height: 10px;
`;

const Thumb = styled.div`
  width: 133px;
  height: 76px;
  margin-left: 4px;
  padding-left: 10px;
  background: #fff;
  border: 1px solid #c6c6c6;
  font-family: ${slideFont};
  font-size: 4px;
  line-height: 4px;
  color: #444;
  ${(p) => p.$on && css`
    border-color: #f6cdb8;
    outline: 2px solid #c9532f;
  `}
`;

const ThumbTitle = styled.div`
  padding-top: ${(p) => p.$pt}px;
  font-size: ${(p) => p.$s || 6}px;
  font-weight: ${(p) => p.$b || 400};
  line-height: 8px;
  color: ${(p) => (p.$b ? "#000" : "#777")};
`;

const ThumbLine = styled.div`
  display: flex;
  height: ${(p) => p.$h}px;
  margin-top: ${(p) => p.$mt || 0}px;
  padding-left: ${(p) => p.$pl || 0}px;
  font-weight: ${(p) => p.$b || 400};
  u {
    color: #1f5fa8;
  }
`;

const BlueBar = styled.span`
  width: 2px;
  height: 45px;
  margin: -15px 0 0 25px;
  background: #6d8fce;
`;

const Canvas = styled.div`
  width: 796px;
  height: 449px;
  margin: 9px 0 0 81px;
  padding: 44px 0 0 61px;
  background: #fff;
  border: 1px solid #c8c8c8;
  font-family: ${slideFont};
  color: #111;
`;

const SlideTitle = styled.h1`
  font-size: 33px;
  font-weight: 300;
  line-height: 40px;
  color: #222;
`;

const Bullets = styled.ul`
  display: flex;
  flex-direction: column;
  gap: 8.200px;
  margin-top: 36px;
  font-size: 21px;
  line-height: 25px;
`;

const Bullet = styled.li`
  display: flex;
  &::before {
    content: "•";
    width: 14.500px;
    flex: none;
    font-size: 17px;
  }
`;

const Link = styled.span`
  margin-left: ${(p) => p.$ml}px;
  color: #1a66b5;
  text-decoration: underline 1.500px;
  text-underline-offset: 3px;
  text-decoration-skip-ink: none;
`;

const Misspelt = styled.span`
  text-decoration: underline wavy #e0605a 1px;
  text-underline-offset: 2px;
  text-decoration-skip-ink: none;
`;

const PointerAnchor = styled.span`
  position: relative;
  width: 0;
`;

const Pointer = styled.span`
  position: absolute;
  left: -9px;
  top: 17px;
`;

const VScroll = styled.div`
  display: flex;
  flex-direction: column;
  align-items: center;
  width: 13px;
  height: 470px;
  margin-left: auto;
  color: #777;
  background: #f3f3f3;
`;

const ScrollBtn = styled.div`
  display: flex;
  align-items: center;
  justify-content: center;
  width: 13px;
  height: 13px;
  margin-top: ${(p) => p.$mt}px;
  border: 1px solid #bdbdbd;
  background: #fff;
`;

const ScrollThumb = styled.div`
  width: 13px;
  height: 99px;
  margin-top: 99px;
  border: 1px solid #bdbdbd;
  background: #fff;
`;

const tests = [
  ["Is Prime?", 84, 7, 478, "https://tests.mettl.com/authenticateKey/b1efaa3d"],
  ["Factorial of number", 184, 6, 464, "https://tests.mettl.com/authenticateKey/8c1f2ae"],
  ["Nth Fibonacci", 127.500, 6.500, 472, "https://tests.mettl.com/authenticateKey/f390cadf"],
  ["Nth Prime", 94, 7, 477, "https://tests.mettl.com/authenticateKey/34fdaa41"],
];

const miniTests = [
  ["• Is Prime?", 17, 82, 5],
  ["• Factorial of number", 34, 79, 5.700],
  ["• Nth Fibonacci", 25, 80, 5.200],
  ["• Nth Prime", 19, 81, 5],
];

function PptBody() {
  return (
    <Body>
      <ThumbPane>
        <ThumbRow>
          <Fit w={8}>1</Fit>
          <Thumb />
        </ThumbRow>
        <ThumbRow $on>
          <Fit w={8}>2</Fit>
          <Thumb $on>
            <ThumbTitle $pt={7}><Fit w={44}>Objective of Day1</Fit></ThumbTitle>
            <ThumbLine $h={4.500} $mt={4.500}><Fit w={113}>• : Learn to solve math based number problems (will require loops and</Fit></ThumbLine>
            <ThumbLine $h={5} $pl={3}><Fit w={11}>maths)</Fit></ThumbLine>
            {miniTests.map(([t, w, lw, h], i) => (
              <ThumbLine key={t} $h={h}>
                <Fit w={w}>{t}</Fit>
                <u><Fit w={lw} ml={1}>{tests[i][4]}</Fit></u>
              </ThumbLine>
            ))}
          </Thumb>
        </ThumbRow>
        <ThumbRow>
          <Fit w={8}>3</Fit>
          <Thumb>
            <ThumbTitle $pt={4} $b={900} $s={5}><Fit w={23}>Problem 2</Fit></ThumbTitle>
            <ThumbLine $h={6} $mt={1.500} $pl={44} $b={900}><Fit w={27}>Alternate Add Sub</Fit></ThumbLine>
            {["Out: 5 2", "In: 10 3", "Out: 10 2", "Out: 10 3"].map((t, i) => (
              <React.Fragment key={t}>
                <ThumbLine $h={6} $pl={16}>
                  <Fit w={10}>{t}</Fit>
                  <Fit w={25 + i * 1.500} ml={16}>5+4-3+2-1+6-7+8</Fit>
                </ThumbLine>
                <ThumbLine $h={5.800} $pl={16}><Fit w={8}>{i % 2 ? "O/P: 12" : "O/P: 5"}</Fit></ThumbLine>
              </React.Fragment>
            ))}
          </Thumb>
        </ThumbRow>
        <ThumbRow>
          <Fit w={8}>4</Fit>
          <Thumb>
            <ThumbTitle $pt={6} $s={5.500}><Fit w={25}>Problem 3</Fit></ThumbTitle>
            <ThumbLine $h={9.500} $mt={16.500} $pl={24} $b={900}><Fit w={60}>Identifying Digits to be Removed</Fit></ThumbLine>
            <ThumbLine $h={5} $pl={19}><Fit w={11}>In: 12321</Fit><Fit w={13} ml={39}>In: 12345</Fit><BlueBar /></ThumbLine>
            <ThumbLine $h={5} $pl={19}><Fit w={7}>O/P: 0</Fit><Fit w={7} ml={43}>O/P: 4</Fit></ThumbLine>
            <ThumbLine $h={5} $pl={19}><Fit w={11}>In: 12331</Fit><Fit w={13} ml={39}>In: 12245</Fit></ThumbLine>
            <ThumbLine $h={5} $pl={19}><Fit w={8}>O/P: 1</Fit><Fit w={7} ml={42}>O/P: 3</Fit></ThumbLine>
          </Thumb>
        </ThumbRow>
      </ThumbPane>
      <Canvas>
        <SlideTitle><Fit w={258}>Objective of Day1</Fit></SlideTitle>
        <Bullets>
          <Bullet>
            <div>
              <Fit w={646.5}>: Learn to solve math based number problems (will require loops and</Fit>
              <br />
              <Misspelt><Fit w={65}>maths)</Fit></Misspelt>
            </div>
          </Bullet>
          {tests.map(([label, w, ml, lw, url], i) => (
            <Bullet key={url}>
              <Fit w={w}>{label}</Fit>
              {i === 3 && (
                <PointerAnchor>
                  <Pointer>
                    <Ic w={7} h={15} $stroke="#333"><path d="M1 .5h2l.5 1 .5-1h2M3.500 1v13M1 14.500h2l.5-1 .5 1h2" /></Ic>
                  </Pointer>
                </PointerAnchor>
              )}
              <Link $ml={ml}><Fit w={lw}>{url}</Fit></Link>
            </Bullet>
          ))}
        </Bullets>
      </Canvas>
      <VScroll>
        <ScrollBtn $mt={1}><Ic w={7} h={4} $fill="#666" $stroke="none"><path d="M0 4h7L3.500 0z" /></Ic></ScrollBtn>
        <ScrollThumb />
        <ScrollBtn $mt={198}><Ic w={7} h={4} $fill="#666" $stroke="none"><path d="M0 0h7L3.500 4z" /></Ic></ScrollBtn>
        <Ic w={7} h={8} $mt={3} $fill="#666" $stroke="none"><path d="M0 3.500h7L3.500 0zM0 7h7L3.500 4zM0 7h7v1H0z" /></Ic>
        <Ic w={7} h={8} $mt={7} $fill="#666" $stroke="none"><path d="M0 0h7v1H0zM0 1h7L3.500 4.500zM0 4.500h7L3.500 8z" /></Ic>
      </VScroll>
    </Body>
  );
}

const StatusBar = styled.div`
  display: flex;
  align-items: center;
  height: 19px;
  background: #de5120;
  color: #ffece2;
  font-size: 9.500px;
`;

const ViewSlot = styled.span`
  display: flex;
  align-items: center;
  justify-content: center;
  width: 32px;
  height: 19px;
  background: ${(p) => (p.$on ? "#bf4218" : "transparent")};
`;

function Status() {
  return (
    <StatusBar>
      <Fit w={53} ml={6}>SLIDE 2 OF 4</Fit>
      <Ic w={12} h={11} $ml={18}>
        <path d="M6 2.500v8M6 2.500Q3.500.5.5 1.500v8q3-1 5.500 1M6 2.500Q8 .5 11 1M6 10.500q2-1.500 5-1M8 4l3 3.500M11 4L8 7.500" />
      </Ic>
      <Spacer />
      <Ic w={10} h={10} $fill="currentColor" $sw={1.200}><path d="M2.500 3L5 .5 7.500 3z" stroke="none" /><path d="M0 4.500h10M0 7h10M0 9.400h6" /></Ic>
      <Fit w={29} ml={4}>NOTES</Fit>
      <Ic w={11} h={10} $ml={17} $fill="currentColor" $stroke="none"><path d="M0 0h11v7H6l-2 3V7H0z" /></Ic>
      <Fit w={51} ml={3}>COMMENTS</Fit>
      <Slot $w={15} />
      <ViewSlot $on><Ic w={12} h={11} $sw={1.300}><path d="M.7.7h10.600v9.600H.7zM3.500.7v9.600M5.500 3h4v2.500h-4zM3.500 8h8" /></Ic></ViewSlot>
      <ViewSlot><Ic w={12} h={11} $fill="currentColor" $stroke="none"><path d="M0 0h5v4.500H0zM7 0h5v4.500H7zM0 6h5v4.500H0zM7 6h5v4.500H7z" /></Ic></ViewSlot>
      <ViewSlot><Ic w={12} h={11}><path d="M6 1.500v9M6 1.500Q3 0 .5 1v8.500Q3 8.500 6 10.500q3-2 5.500-1V1Q9 0 6 1.500M2 3h2.500M2 5h2.500M2 7h2.500M7.500 3H10M7.500 5H10M7.500 7H10" /></Ic></ViewSlot>
      <ViewSlot><Ic w={11} h={11}><path d="M0 1h11M1.500 1v5.500h8V1M5.500 6.500v4M3 10.500h5M4 3.500h3" /></Ic></ViewSlot>
      <Slot $w={12}><Ic w={5} h={2} $sw={2}><path d="M0 1h5" /></Ic></Slot>
      <Ic w={84} h={11}>
        <path d="M0 5.500h84M42.500 3v5" />
        <path d="M30 0h3v11h-3z" fill="currentColor" stroke="none" />
      </Ic>
      <Slot $w={13}><Ic w={7} $sw={1.800}><path d="M0 3.500h7M3.500 0v7" /></Ic></Slot>
      <Fit w={18} ml={9}>74%</Fit>
      <Ic w={12} h={11} $ml={11}><path d="M.5.5h11v10H.5zM6 2v7M2 5.500h8M2.500 2.500l2 2M9.500 2.500l-2 2M2.500 8.500l2-2M9.500 8.500l-2-2" /></Ic>
      <Slot $w={6} />
    </StatusBar>
  );
}

const Taskbar = styled.div`
  position: relative;
  display: flex;
  align-items: center;
  height: 33px;
  border-top: 1px solid #4a6f96;
  background: linear-gradient(90deg, #2a669e 0, #3a84c0 10%, #2c7fc8 38%, #3087cf 50%, #1c74c0 60%, #1a63b4 73%, #1457a2 83%, #0f3e79 87%, #0d3468 100%);
  color: #fff;
  font-size: 10.500px;
`;

const Streak = styled.svg`
  position: absolute;
  left: 410px;
  top: 0;
  filter: blur(1px);
`;

const TaskButton = styled.div`
  display: flex;
  align-items: center;
  justify-content: center;
  width: ${(p) => p.$w}px;
  height: 32px;
  margin-left: ${(p) => p.$ml || 0}px;
  border: 1px solid #2c5379;
  border-radius: 2px;
  box-shadow: inset 0 0 0 1px ${(p) => (p.$on ? "#f2f8fd" : "#a8cde9")}${(p) => (p.$stack ? ", 2px 0 0 #7fb3dc, 3px 0 0 #2c5379" : "")};
  background: ${(p) => (p.$on ? "linear-gradient(#b9d6ee, #e8e6ea)" : "linear-gradient(#8fc0e4, #5d9fd4)")};
`;

const Clock = styled.div`
  display: flex;
  flex-direction: column;
  align-items: center;
  width: 46px;
  line-height: 14px;
  margin-left: 11px;
`;

const ShowDesktop = styled.div`
  width: 12px;
  height: 32px;
  margin: 0 1px 0 7px;
  border: 1px solid #5d83ab;
  background: linear-gradient(135deg, #44709f, #0c2c55 60%);
`;

const Office = ({ color, letter, children }) => (
  <Ic w={27} h={27} $stroke={color} $sw={1.400}>
    <path d="M12 4h13v19H12z" fill="#fff" />
    {children}
    <path d="M0 3l15-3v27L0 24z" fill={color} stroke="none" />
    <GlyphText x="3.500" y="18.500" $s={14} $b={700} $c="#fff">{letter}</GlyphText>
  </Ic>
);

function Tasks() {
  return (
    <Taskbar>
      <Streak width="460" height="32" fill="none">
        <path d="M0 30Q140 12 330 -2" stroke="#6db1e8" strokeOpacity=".35" strokeWidth="6" />
        <path d="M338-4Q385 4 418 36" stroke="#9cccf8" strokeWidth="6" />
      </Streak>
      <Ic w={30} $ml={8} $stroke="none">
        <circle cx="15" cy="15" r="15" fill="#1d4f7e" />
        <circle cx="15" cy="15" r="13.800" fill="#3f86bd" />
        <path d="M3 11a13 13 0 0 1 24 0q-12 6-24 0z" fill="#b9d3e6" />
        <path d="M8 8.500q3.500-1.500 6.500.3v6q-3-1.800-6.500-.3z" fill="#f0592a" />
        <path d="M15.500 9.200q3 1.600 7 .2l-1 6q-3 1.400-6 0z" fill="#8cc63f" />
        <path d="M7.500 15.800q3.500-1.500 6.500.2v6q-3-1.700-6-.2z" fill="#35a7e8" />
        <path d="M15.200 16.500q3 1.500 6.300 0l-1 6q-2.500 1.400-5.300 0z" fill="#fdcb2e" />
      </Ic>
      <Ic w={26} $ml={24} $stroke="#1b5fb8" $sw={4.500} box="0 0 28 28">
        <path d="M22.500 19a8.500 8.500 0 1 1 .8-4.500H9" />
        <path d="M3 26.500C-1 21 14 1 24.500 2.500c3 .6 1.500 4 .5 6" stroke="#f0c246" strokeWidth="2.600" />
      </Ic>
      <Ic w={26} $ml={26} $stroke="none">
        <path d="M13 3.500c3-1 3.500-3.500 3.500-3.500C22 4 25.500 9 25.500 14a12.500 12 0 0 1-25 0C.5 10 2.500 6.500 3 4c1.500 1 2 2 2.500 3C7 5 10 5 13 3.500z" fill="#ff9a1f" />
        <path d="M.5 14C.5 10 2.500 6.500 3 4c1.500 1 2 2 2.500 3 3-2 8 0 8 0s-5 1-5 5c2 8 12 8 15 8A12.500 12 0 0 1 .5 14z" fill="#fb4b4e" />
        <path d="M16.500 0C22 4 25.500 9 25.500 14q0 3-2 6c0-6-9-12-7-20z" fill="#ffd53a" />
        <circle cx="13" cy="13.500" r="5.500" fill="#7a4bd6" />
      </Ic>
      <TaskButton $w={49} $ml={14}>
        <Ic w={28} h={26} $stroke="none">
          <path d="M1 3h9l2 3h14v18H1z" fill="#e9cf7d" />
          <path d="M4 1h6v4H4zM12 2h6v4h-6z" fill="#fff" />
          <path d="M5 2h2v2H5z" fill="#3a9f4b" /><path d="M13 3h2v2h-2z" fill="#d8452f" />
          <path d="M1 8h26v15H1z" fill="#f9e9b0" />
          <path d="M4 25v-8h20v8h-5v-4H9v4z" fill="#8cc2e8" />
        </Ic>
      </TaskButton>
      <TaskButton $w={45} $ml={3} $stack>
        <Ic w={26} $stroke="none">
          <circle cx="13" cy="13" r="12.500" fill="#fff" />
          <path d="M13 .5a12.500 12.500 0 0 1 10.800 6.300H13A6.200 6.200 0 0 0 7.200 10.500L2.200 6.700A12.500 12.500 0 0 1 13 .5z" fill="#e8453c" />
          <path d="M2.200 6.700l5.400 9.400A6.200 6.200 0 0 0 13 19.200l1.500-.2L12 25.500A12.500 12.500 0 0 1 2.200 6.700z" fill="#3aa757" />
          <path d="M23.800 6.800A12.500 12.500 0 0 1 12 25.500l6.400-9.400A6.200 6.200 0 0 0 17.600 8.700L16 6.800z" fill="#fbc116" />
          <circle cx="13" cy="13" r="6.200" fill="#fff" /><circle cx="13" cy="13" r="4.900" fill="#2b6fe0" />
        </Ic>
      </TaskButton>
      <TaskButton $w={46} $ml={7} $stack>
        <Office color="#1d7145" letter="X">
          <path d="M14 8h11M14 12h11M14 16h11M14 20h11M20 4v19" />
        </Office>
      </TaskButton>
      <TaskButton $w={50} $ml={6} $on>
        <Office color="#d24726" letter="P">
          <path d="M16 16h7M16 19h7M20 6.500v4h3.500a3.500 3.500 0 1 1-3.500-4" />
        </Office>
      </TaskButton>
      <TaskButton $w={50} $ml={2}>
        <Ic w={24} h={25} $stroke="#6f95ab">
          <path d="M17 1.500l3 .8 2.500 18.700-7 3z" fill="#e6edf1" />
          <path d="M5.500 2.500l11.500-1-2 22.500-13-3.500z" fill="#8cc3d8" />
          <path d="M5.500 2.500l11.500-1-.5 4.500-11.500 0z" fill="#c5dde8" stroke="none" />
        </Ic>
      </TaskButton>
      <Spacer />
      <Ic w={7} h={4} $fill="#fff" $stroke="none"><path d="M0 4h7L3.500 0z" /></Ic>
      <Ic w={12} h={13} $ml={10} $fill="#fff" $stroke="none"><path d="M0 0h1.500v13H0zM2.500 2H8v2h4l-1.500 2.500L12 8H7V7.500H2.500z" /></Ic>
      <Ic w={12} h={13} $ml={8} $stroke="#fff" $sw={1.200}>
        <path d="M4 1.500H1v10h6M3 3.500v6" /><path d="M5 4.500h6v3a3 3 0 0 1-6 0z" fill="#fff" /><path d="M6.500 1v3M9.500 1v3M8 10v3" />
      </Ic>
      <Ic w={13} h={12} $ml={9} $stroke="#fff">
        <path d="M0 4h2.500L6 .5v11L2.500 8H0z" fill="#fff" /><path d="M8 3.500q1.500 2.500 0 5M10.500 2q2.500 4 0 8" />
      </Ic>
      <Clock><Fit w={36}>1:20 PM</Fit><Fit w={44}>4/28/2022</Fit></Clock>
      <ShowDesktop />
    </Taskbar>
  );
}

/* ---------- participants panel ---------- */

const Panel = styled.aside`
  display: flex;
  flex-direction: column;
  width: 607px;
  height: 832px;
  padding-left: 15px;
  background: #fff;
  border-radius: 8px;
  overflow: hidden;
`;

const PanelHead = styled.div`
  display: flex;
  align-items: center;
  height: 46px;
  font-size: 17px;
  font-weight: 700;
  color: #000;
`;

const SearchRow = styled.div`
  display: flex;
  align-items: center;
  margin-top: 26px;
`;

const SearchField = styled.div`
  display: flex;
  align-items: center;
  width: 547px;
  height: 40px;
  padding: 0 0 2px 15px;
  border: 1px solid #c2c2c2;
  border-radius: 9px;
  font-size: 15px;
  color: #666;
`;

const ListArea = styled.div`
  display: flex;
  height: 720px;
`;

const List = styled.ul`
  width: 582px;
  padding-top: 13px;
`;

const ListThumb = styled.div`
  width: 10px;
  height: 25px;
  margin-top: 13px;
  border-radius: 5px;
  background: #d2d2d2;
`;

const Person = styled.li`
  display: flex;
  align-items: center;
  height: 60px;
`;

const Initials = styled.div`
  position: relative;
  display: flex;
  align-items: center;
  justify-content: center;
  width: 40px;
  height: 40px;
  border-radius: 50%;
  background: #808080;
  color: #f4f4f4;
  font-size: 17px;
  letter-spacing: -0.3px;
`;

const Sharing = styled.span`
  position: absolute;
  right: -1px;
  bottom: -1px;
  display: flex;
  align-items: center;
  justify-content: center;
  width: 20px;
  height: 17px;
  border-radius: 9px 5px 5px 9px;
  background: #fff;
`;

const SharingTile = styled.span`
  display: flex;
  width: 13px;
  height: 11px;
  border-radius: 2px;
  background: #d81f34;
  color: #fff;
`;

const Names = styled.div`
  width: 344px;
  margin: ${(p) => (p.$sub ? "-2px" : "-2px")} 0 0 13px;
  font-size: ${(p) => (p.$plain ? 19 : 20)}px;
  font-weight: 300;
  line-height: 28px;
`;

const Role = styled.div`
  font-size: 15px;
  line-height: 22px;
  color: #777;
`;

const micRed = "#e4556d";
const micGreen = "#3cb78f";

const Mic = ({ state }) =>
  state === "muted" ? (
    <Ic w={14} h={16} $stroke={micRed} $mt={5} $sw={1.100}>
      <path d="M4.500 9V3.500a3 3 0 0 1 6 0V8a3 3 0 0 1-1 2.500M5.500 10.800Q7.500 12 7.500 15.500M2 15.500h10M.5 1l13 13.500" />
    </Ic>
  ) : (
    <Ic w={14} h={16} $stroke={micGreen} $mt={5} $sw={1.100}>
      {state === "talking" && <path d="M4.500 8.500h6l-1.500 3h-3z" fill={micGreen} stroke="none" />}
      <rect x="4.500" y=".5" width="6" height="11" rx="3" />
      <path d="M7.500 12v3.500M2.500 15.500h10" />
    </Ic>
  );

const people = [
  ["0D", "0176CS191122_Prince Dwivedi", 294, "muted", "Me", 21],
  ["VK", "Vivek Kumar", 112.500, "talking", "Host", 31],
  ["YS", "Yash Shrivastava", 151.500, "muted", "Cohost", 49],
  ["0G", "0103CS191006_ABHINAV G...", 280, "muted"],
  ["0K", "0103CS191029_Akshat Kumar", 286, "muted"],
  ["0R", "0103CS191037_Ankur Rai", 246, "muted"],
  ["0K", "0103CS191046_Anurag kumar", 287, "muted"],
  ["0A", "0103CS191074_Diksha Akan...", 287, "muted"],
  ["0B", "0103CS191090_Harshita Bijlani", 292, "muted"],
  ["0", "0103CS191104_KhanSaifAli", 261, "open"],
  ["0", "0103CS191184_SOUMYA_J...", 281, "muted"],
  ["0M", "0103CS191199 Vanshita Malv...", 294, "muted"],
];
const onPhone = [3, 6];

function Participants() {
  return (
    <Panel>
      <PanelHead>
        <Fit w={151}>Participants (354)</Fit>
        <Ic w={14} $ml={381} $sw={1.300} $stroke="#222">
          <path d="M8.500 1h3A1.500 1.500 0 0 1 13 2.500v9a1.500 1.500 0 0 1-1.500 1.500h-9A1.500 1.500 0 0 1 1 11.500V9M1 6.500V1.500h5M1.500 2L7 7.500" />
        </Ic>
        <Ic w={10} $ml={13} $sw={1.200}><path d="M.5.5l9 9M9.500.5l-9 9" /></Ic>
      </PanelHead>
      <SearchRow>
        <SearchField>
          <Ic w={14} $mt={9} $sw={1.200} $stroke="#222"><circle cx="6.500" cy="6.500" r="5.700" /><path d="M10.500 10.500L13 13.500" /></Ic>
          <Fit w={48} ml={14}>Search</Fit>
        </SearchField>
        <Ic w={20} h={18} $ml={12} $sw={1.500}>
          <path d="M5.500.5v16M.8 12l4.700 4.800L10.200 12M14.500 17.500v-16M9.800 6l4.700-4.800L19.200 6" />
        </Ic>
      </SearchRow>
      <ListArea>
        <List>
          {people.map(([ini, name, w, mic, role, rw], i) => (
            <Person key={name}>
              <Initials>
                {ini}
                {mic === "talking" && (
                  <Sharing>
                    <SharingTile><Ic w={13} h={11} $sw={1.300}><path d="M6.500 9V3M4 5l2.500-2.500L9 5" /></Ic></SharingTile>
                  </Sharing>
                )}
              </Initials>
              <Slot $w={14} $ml={16}>
                {onPhone.includes(i) ? (
                  <Ic w={11} h={14} $sw={1.200}>
                    <rect x="1" y=".6" width="9" height="12.800" rx="1.500" /><path d="M1 10.500h9M4.500 12h2" />
                  </Ic>
                ) : (
                  <Ic w={14} $sw={1.200}>
                    <path d="M2.500 6.500a4.500 4.500 0 0 1 9 0V8M11.500 9q0 3-3 3.500" />
                    <path d="M2 6v3.500M12 6v3.500" strokeWidth="2.400" /><circle cx="7.500" cy="12.700" r="1" fill="currentColor" />
                  </Ic>
                )}
              </Slot>
              <Names $sub={!!role} $plain={i === 1 || i === 2}>
                <Fit w={w}>{name}</Fit>
                {role && <Role><Fit w={rw}>{role}</Fit></Role>}
              </Names>
              <Slot $w={16}>
                {i === 0 && (
                  <Ic w={16} h={12} $sw={1.300} $mt={5}>
                    <rect x=".7" y=".7" width="14.600" height="10.600" rx="2" />
                    <circle cx="5.500" cy="4.200" r="1.300" /><path d="M3 8.800q0-2.300 2.500-2.300T8 8.800zM10 4h3M10 6h3M10 8.500h3" />
                  </Ic>
                )}
              </Slot>
              <Slot $w={14} $ml={65}><Mic state={mic} /></Slot>
            </Person>
          ))}
        </List>
        <ListThumb />
      </ListArea>
    </Panel>
  );
}

/* ---------- meeting controls ---------- */

const Controls = styled.footer`
  display: flex;
  align-items: flex-start;
  height: 79px;
  padding: 15px 0 0 26px;
  font-size: 20px;
`;

const Pill = styled.button`
  display: flex;
  align-items: center;
  flex: none;
  width: ${(p) => p.$w}px;
  height: 50px;
  margin: 0 0 0 ${(p) => p.$ml || 10}px;
  padding: 0 0 0 ${(p) => p.$pl || 0}px;
  justify-content: ${(p) => (p.$center ? "center" : "flex-start")};
  border: 1px solid ${(p) => p.$edge || "#a3a3a3"};
  border-radius: 25px;
  background: ${(p) => p.$bg || "transparent"};
  color: ${(p) => p.$c || "#111"};
  font: inherit;
`;

const Dots = () => (
  <Ic w={15} h={3} $fill="currentColor" $stroke="none">
    <circle cx="1.500" cy="1.500" r="1.200" /><circle cx="7.500" cy="1.500" r="1.200" /><circle cx="13.500" cy="1.500" r="1.200" />
  </Ic>
);

const MoreWrap = styled.div`
  position: relative;
  display: flex;
  align-items: center;
  height: 50px;
  margin-left: 26px;
`;

const UnreadDot = styled.span`
  position: absolute;
  top: 0;
  left: 15px;
  width: 12px;
  height: 12px;
  border-radius: 50%;
  background: #1170cf;
`;

function ControlBar() {
  return (
    <Controls>
      <Ic w={23} h={20} $mt={17} $sw={1.700}>
        <path d="M4 1h15a3 3 0 0 1 3 3v9a3 3 0 0 1-3 3H8l-5 3H1l1-3V4a3 3 0 0 1 2-3z" />
        <GlyphText x="6" y="12" $s={9.500} $b={700} $f={webex}>cc</GlyphText>
      </Ic>
      <Pill $w={170} $ml={540} $pl={24}>
        <Ic w={21} h={24} $stroke="#e0442e" $sw={1.500}>
          <path d="M6.500 12V5.500a4 4 0 0 1 8 0V12a4 4 0 0 1-1.500 3.500M6.500 14a4 4 0 0 0 3 3v5.500M3.500 22.500h13M1 1l19 21.500" />
        </Ic>
        <Fit w={72} ml={9}>Unmute</Fit>
        <Slot $w={12} $ml={13}><Chevron /></Slot>
      </Pill>
      <Pill $w={196} $pl={20}>
        <Ic w={24} h={21} $stroke="#e0442e" $sw={1.500}>
          <path d="M5 3h10a2 2 0 0 1 2 2v9M15 18.500H3A2 2 0 0 1 1 16.500V5q0-2 1.500-2M17 8.500l5-3v10.500l-4-2M2 1l19 19" />
        </Ic>
        <Fit w={101} ml={9}>Start video</Fit>
        <Slot $w={12} $ml={11}><Chevron /></Slot>
      </Pill>
      <Pill $w={129} $pl={21}>
        <ShareGlyph w={23} h={18} />
        <Fit w={54} ml={8}>Share</Fit>
      </Pill>
      <Pill $w={98} $pl={16}>
        <Ic w={16} h={22} $sw={1.600}>
          <path d="M1.500 5v10q0 6 6.500 6 5.500 0 6.500-7V10.500q-1-1.500-2.500.5l-1.500 3V3q-1-1.500-2.500 0v8V2Q6.500.5 5 2v9V3.500Q3 2 1.500 4.500M10.500 4.500q2-2 2.500 0v6M10 13q-3 .5-3 4" />
        </Ic>
        <Pipe $h={25} $ml={15} $c="#a8a8a8" />
        <Ic w={24} h={23} $ml={12} $sw={1.700}>
          <path d="M14 2.800A9.700 9.700 0 1 0 20.800 10" />
          <path d="M19 0v8M15 4h8M6.500 14q4.500 5 9 0" />
          <circle cx="8" cy="9.800" r="1" fill="currentColor" /><circle cx="14" cy="9.800" r="1" fill="currentColor" />
        </Ic>
      </Pill>
      <Pill $w={50} $ml={9} $center><Dots /></Pill>
      <Pill $w={50} $bg="#dc1f2e" $edge="#dc1f2e" $c="#fff" $center>
        <Ic w={17} $sw={1.500}><path d="M1 1l15 15M16 1L1 16" /></Ic>
      </Pill>
      <Pill $w={184} $ml={197} $pl={21} $bg="#c6c6c6" $edge="#c6c6c6">
        <Ic w={22} h={23} $fill="#111" $stroke="none" $mt={3}>
          <circle cx="9" cy="4.500" r="4.500" />
          <path d="M9 10.500q4 0 5.500 2.500H11v8.500H2q-2 0-2-2 0-9 9-9z" />
          <path d="M12 15h10M12 18.300h10M12 21.600h10" stroke="#111" strokeWidth="1.700" />
        </Ic>
        <Fit w={108} ml={11}>Participants</Fit>
      </Pill>
      <Pill $w={110} $ml={20} $pl={10} $edge="transparent">
        <Ic w={22} h={22} $sw={1.600} $mt={3}>
          <path d="M3 15.500A9.500 9.500 0 1 1 7 19.500L2.500 20.800Q1 21 1.500 19.800z" />
        </Ic>
        <Fit w={43} ml={12}>Chat</Fit>
      </Pill>
      <MoreWrap>
        <UnreadDot />
        <Dots />
      </MoreWrap>
    </Controls>
  );
}

export default function App() {
  return (
    <Page>
      <Global />
      <BrowserChrome />
      <Webex>
        <InfoBar>
          <Ic w={14} $sw={1.200} $mt={4}><circle cx="7" cy="7" r="6.300" /><path d="M7 10.200V6.500M6 10.200h2M7 3.800v1.200M6.200 6.500H7" /></Ic>
          <Fit w={94} ml={6}>Meeting Info</Fit>
          <Fit w={63} ml={1715}>01:09:22</Fit>
        </InfoBar>
        <Middle>
          <Stage>
            <TopStrip />
            <Ppt>
              <QuickAccess />
              <PptTabs />
              <RibbonBar />
              <PptBody />
              <Status />
              <Tasks />
            </Ppt>
          </Stage>
          <Participants />
        </Middle>
        <ControlBar />
      </Webex>
    </Page>
  );
}
